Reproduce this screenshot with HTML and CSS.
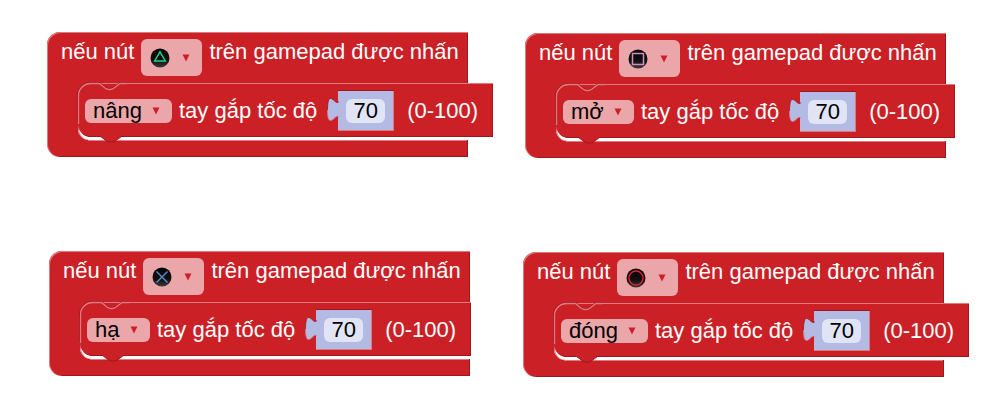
FILE: index.html
```html
<!DOCTYPE html>
<html lang="vi">
<head>
<meta charset="utf-8">
<title>Gamepad</title>
<link rel="stylesheet" href="styles.css">
</head>
<body>
<svg class="defs" aria-hidden="true">
  <defs>
    <linearGradient id="disc" x1="0" y1="0" x2="0" y2="1">
      <stop offset="0" stop-color="#050505"/><stop offset=".6" stop-color="#101010"/><stop offset="1" stop-color="#3a3a3a"/>
    </linearGradient>
    <symbol id="arrow" viewBox="0 0 8 8"><path d="M.5 .5h7L4 7.5z" fill="#cc2027"/></symbol>
    <symbol id="top" viewBox="0 0 50 42">
      <path d="M.5 41V13A12.500 12.500 0 0 1 13 .5H23l5 4.500q2 1.500 4 1.500h1q2 0 4-1.500L43 .5h7" fill="none" stroke="#9c181d"/>
      <path d="M1.500 42V14A12 12 0 0 1 13.500 1.500H22.500l5.500 4.500q2 1.500 4 1.500h1q2 0 4-1.500L43 1.500h7" fill="none" stroke="#e0797d" stroke-width="1.300"/>
    </symbol>
    <symbol id="bottom" viewBox="0 0 50 8">
      <path d="M22 0l6 4.500q2 1.500 4 1.500h2q2 0 4-1.500L44 0z" fill="#cc2027"/>
      <path d="M22.500 .5l5.500 4q2 1.500 4 1.500h2q2 0 4-1.500l5.500-4" fill="none" stroke="#9c181d"/>
    </symbol>
    <symbol id="tab" viewBox="0 0 12 26">
      <path d="M12 4.500C9 8 7 1.500 3.500 1.500C1 1.500 .5 8 .5 13S1 23.500 3.500 23.500C7 23.500 9 17 12 20z" fill="#b3bbe5"/>
      <path d="M12 4.500C9 8 7 1.500 3.500 1.500C1 1.500 .5 8 .5 13" fill="none" stroke="#9c181d" stroke-width=".8"/>
      <path d="M.5 13C.5 18 1 23.500 3.500 23.500C7 23.500 9 17 12 20" fill="none" stroke="#e0797d" stroke-width=".8"/>
    </symbol>
  </defs>
</svg>
<main class="workspace">

  <section class="block block-raise">
    <div class="head">
      <span>nếu nút</span>
      <button class="pick" type="button" aria-label="Tam giác" aria-haspopup="listbox">
        <svg class="disc" viewBox="0 0 20 20"><circle cx="10" cy="10" r="9.500" fill="url(#disc)"/><path d="M10 3.800L15.300 13H4.700z" fill="none" stroke="#1fce8d" stroke-width="1.500"/></svg>
        <svg class="arrow"><use href="#arrow"/></svg>
      </button>
      <span>trên gamepad được nhấn</span>
    </div>
    <div class="body"><div class="mouth"><div class="statement">
      <svg class="edge-top"><use href="#top"/></svg>
      <span class="field"><select aria-label="Hành động"><option>nâng</option></select><svg class="arrow"><use href="#arrow"/></svg></span>
      <label for="speed-raise">tay gắp tốc độ</label>
      <span class="value"><svg class="tab"><use href="#tab"/></svg><input id="speed-raise" type="text" inputmode="numeric" value="70"></span>
      <span class="range">(0-100)</span>
      <svg class="edge-bottom"><use href="#bottom"/></svg>
    </div></div></div>
    <div class="foot"></div>
  </section>

  <section class="block block-open">
    <div class="head">
      <span>nếu nút</span>
      <button class="pick" type="button" aria-label="Vuông" aria-haspopup="listbox">
        <svg class="disc" viewBox="0 0 20 20"><circle cx="10" cy="10" r="9.500" fill="url(#disc)"/><path d="M4.500 4.500h11v11h-11z" fill="none" stroke="#d58bc4" stroke-width="1.500"/></svg>
        <svg class="arrow"><use href="#arrow"/></svg>
      </button>
      <span>trên gamepad được nhấn</span>
    </div>
    <div class="body"><div class="mouth"><div class="statement">
      <svg class="edge-top"><use href="#top"/></svg>
      <span class="field"><select aria-label="Hành động"><option>mở</option></select><svg class="arrow"><use href="#arrow"/></svg></span>
      <label for="speed-open">tay gắp tốc độ</label>
      <span class="value"><svg class="tab"><use href="#tab"/></svg><input id="speed-open" type="text" inputmode="numeric" value="70"></span>
      <span class="range">(0-100)</span>
      <svg class="edge-bottom"><use href="#bottom"/></svg>
    </div></div></div>
    <div class="foot"></div>
  </section>

  <section class="block block-lower">
    <div class="head">
      <span>nếu nút</span>
      <button class="pick" type="button" aria-label="Chéo" aria-haspopup="listbox">
        <svg class="disc" viewBox="0 0 20 20"><circle cx="10" cy="10" r="9.500" fill="url(#disc)"/><path d="M4.500 4.500l11 11M15.500 4.500l-11 11" fill="none" stroke="#5f8fd0" stroke-width="1.400"/></svg>
        <svg class="arrow"><use href="#arrow"/></svg>
      </button>
      <span>trên gamepad được nhấn</span>
    </div>
    <div class="body"><div class="mouth"><div class="statement">
      <svg class="edge-top"><use href="#top"/></svg>
      <span class="field"><select aria-label="Hành động"><option>hạ</option></select><svg class="arrow"><use href="#arrow"/></svg></span>
      <label for="speed-lower">tay gắp tốc độ</label>
      <span class="value"><svg class="tab"><use href="#tab"/></svg><input id="speed-lower" type="text" inputmode="numeric" value="70"></span>
      <span class="range">(0-100)</span>
      <svg class="edge-bottom"><use href="#bottom"/></svg>
    </div></div></div>
    <div class="foot"></div>
  </section>

  <section class="block block-close">
    <div class="head">
      <span>nếu nút</span>
      <button class="pick" type="button" aria-label="Tròn" aria-haspopup="listbox">
        <svg class="disc" viewBox="0 0 20 20"><circle cx="10" cy="10" r="9.500" fill="url(#disc)"/><circle cx="10" cy="10" r="7" fill="none" stroke="#e0202e" stroke-width="1.400"/></svg>
        <svg class="arrow"><use href="#arrow"/></svg>
      </button>
      <span>trên gamepad được nhấn</span>
    </div>
    <div class="body"><div class="mouth"><div class="statement">
      <svg class="edge-top"><use href="#top"/></svg>
      <span class="field"><select aria-label="Hành động"><option>đóng</option></select><svg class="arrow"><use href="#arrow"/></svg></span>
      <label for="speed-close">tay gắp tốc độ</label>
      <span class="value"><svg class="tab"><use href="#tab"/></svg><input id="speed-close" type="text" inputmode="numeric" value="70"></span>
      <span class="range">(0-100)</span>
      <svg class="edge-bottom"><use href="#bottom"/></svg>
    </div></div></div>
    <div class="foot"></div>
  </section>

</main>
</body>
</html>
```
FILE: styles.css
```css
:root {
  --red: #cc2027;
  --light: #e0797d;
  --dark: #9c181d;
  --pill: #eba6a9;
}

* { box-sizing: border-box; }

body {
  margin: 0;
  background: #fff;
  color: #fff;
  font: 22px/24px "Liberation Sans", Arial, sans-serif;
}

.defs {
  position: absolute;
  width: 0;
  height: 0;
}

.workspace {
  position: relative;
  min-height: 100vh;
  overflow: hidden;
}

/* Each block sits at its own place on the free workspace. */
.block {
  position: absolute;
  display: grid;
  white-space: nowrap;
}

.block-raise { left: 47px; top: 32px; }
.block-open { left: 525px; top: 33px; }
.block-lower { left: 49px; top: 251px; }
.block-close { left: 523px; top: 252px; }

.head {
  display: flex;
  align-items: flex-start;
  gap: 7px;
  padding: 7px 9px 7px 14px;
  border-radius: 13px 0 0 0;
  background: var(--red);
  box-shadow: inset 1px 1px 0 var(--light), inset -1px 0 0 var(--dark);
  line-height: 26px;
}

.pick {
  display: flex;
  align-items: center;
  gap: 12px;
  width: 61px;
  height: 37px;
  padding: 0 0 0 9px;
  border: 0;
  border-radius: 6px;
  background: var(--pill);
}

.disc { width: 20px; height: 20px; }
.arrow { width: 8px; height: 8px; flex: none; pointer-events: none; }

.body {
  width: 60px;
  padding-left: 31px;
  background: var(--red);
  box-shadow: inset 1px 0 0 var(--light);
}

.mouth {
  width: max-content;
  padding-bottom: 3px;
  border-radius: 13px 0 0 11px;
  background: #fff;
  box-shadow: inset 1px 0 0 var(--light);
}

.statement {
  position: relative;
  display: flex;
  align-items: center;
  height: 54px;
  padding: 1px 15px 0 7px;
  border-radius: 13px 0 0 13px;
  background: var(--red);
  box-shadow: inset 0 1px 0 var(--light), inset -1px -1px 0 var(--dark);
}

.edge-top, .edge-bottom {
  position: absolute;
  left: -1px;
  width: 50px;
}

.edge-top { top: -1px; height: 42px; }
.edge-bottom { left: 0; bottom: -7px; height: 8px; }

.field {
  display: flex;
  align-items: center;
  gap: 10px;
  height: 24px;
  padding: 0 12px 0 8px;
  margin-right: 7px;
  border-radius: 6px;
  background: var(--pill);
}

select {
  height: 24px;
  margin: 0;
  padding: 0;
  border: 0;
  appearance: none;
  background: transparent;
  color: #000;
  font: inherit;
}

.value {
  position: relative;
  display: flex;
  align-items: center;
  height: 40px;
  margin: 0 13px 0 21px;
  padding: 0 9px 0 8px;
  background: #b3bbe5;
  box-shadow: inset -1px -1px 0 var(--light), 0 -1px 0 var(--dark);
}

.tab {
  position: absolute;
  left: -11px;
  top: 6px;
  width: 12px;
  height: 26px;
}

input {
  width: 39px;
  height: 24px;
  padding: 0;
  border: 0;
  border-radius: 6px;
  background: #e1e4f5;
  color: #000;
  font: inherit;
  text-align: center;
}

.foot {
  height: 17px;
  border-radius: 0 0 0 13px;
  background:
    linear-gradient(var(--light), var(--light)) 41px 0 / 100% 1px no-repeat,
    var(--red);
  box-shadow: inset 1px 0 0 var(--light), inset -1px -1px 0 var(--dark);
}
```
